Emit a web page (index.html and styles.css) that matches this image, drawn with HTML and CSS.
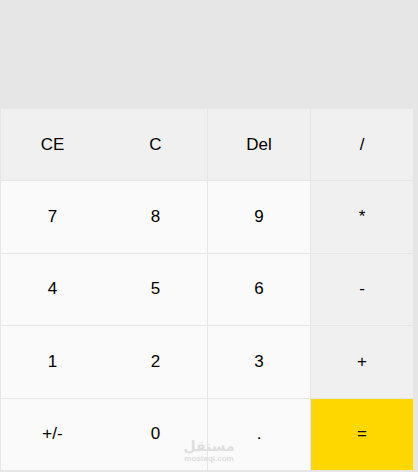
FILE: index.html
```html
<!DOCTYPE html>
<html lang="en">
<head>
    <meta charset="UTF-8">
    <meta name="viewport" content="width=device-width, initial-scale=1.0">
    <title>Calculator</title>
    <link rel="stylesheet" href="styles.css">
</head>
<body>
    <main class="calculator">
        <output class="display" aria-label="Result"></output>
        <div class="keys">
            <button type="button" class="key function">CE</button>
            <button type="button" class="key function">C</button>
            <button type="button" class="key function">Del</button>
            <button type="button" class="key function">/</button>

            <button type="button" class="key">7</button>
            <button type="button" class="key">8</button>
            <button type="button" class="key">9</button>
            <button type="button" class="key function">*</button>

            <button type="button" class="key">4</button>
            <button type="button" class="key">5</button>
            <button type="button" class="key">6</button>
            <button type="button" class="key function">-</button>

            <button type="button" class="key">1</button>
            <button type="button" class="key">2</button>
            <button type="button" class="key">3</button>
            <button type="button" class="key function">+</button>

            <button type="button" class="key">+/-</button>
            <button type="button" class="key">0</button>
            <button type="button" class="key">.</button>
            <button type="button" class="key equals">=</button>
        </div>
        <div class="watermark">
            <span class="watermark-name" lang="ar" dir="rtl">مستقل</span>
            <span class="watermark-site">mostaql.com</span>
        </div>
    </main>
</body>
</html>
```

FILE: styles.css
```css
* {
    box-sizing: border-box;
}
body {
    margin: 0;
    background: #e6e6e6;
    font-family: Arial, "Liberation Sans", sans-serif;
}
.calculator {
    position: relative;
    display: flex;
    flex-direction: column;
    min-height: 100vh;
    padding: 0 5px 2px 1px;
}
.display {
    display: block;
    height: 108px;
    flex: none;
}
.keys {
    flex: 1;
    display: grid;
    grid-template-columns: repeat(4, 1fr);
    grid-template-rows: repeat(5, 1fr);
}
.key {
    margin: 0;
    padding: 0;
    border: 0 solid #e6e6e6;
    border-top-width: 1px;
    background: #fafafa;
    color: #000;
    font-family: inherit;
    font-size: 17px;
    cursor: pointer;
}
/* only the last two columns have a divider */
.key:nth-child(4n + 3),
.key:nth-child(4n) {
    border-left-width: 1px;
}
.function {
    background: #f0f0f0;
}
.equals {
    background: #ffd700;
}
.key:hover {
    filter: brightness(0.95);
}
.watermark {
    position: absolute;
    left: 50%;
    bottom: 9px;
    transform: translateX(-50%);
    display: flex;
    flex-direction: column;
    align-items: center;
    color: #dedede;
    font-weight: bold;
    pointer-events: none;
}
.watermark-name {
    font-family: "DejaVu Sans", sans-serif;
    font-size: 14px;
    line-height: 17px;
}
.watermark-site {
    font-size: 8px;
    line-height: 8px;
}
```
